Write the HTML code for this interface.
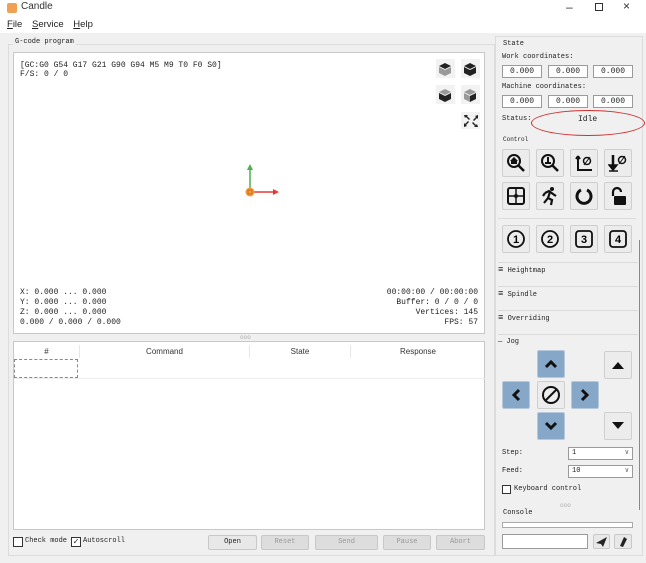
<!DOCTYPE html><html><head><style>
*{margin:0;padding:0;box-sizing:border-box}
body{width:646px;height:563px;background:#f0f0f0;position:relative;overflow:hidden;font-family:"Liberation Mono",monospace;font-size:8px;color:#222}
.a{position:absolute}
.box{position:absolute;background:#fff;border:1px solid #adadad}
.btn{position:absolute;background:#e8e8e8;border:1px solid #c8c8c8;border-radius:2px}
.cb{position:absolute;width:28px;height:28px;background:#ececec;border:1px solid #cfcfcf;border-radius:2px;display:flex;align-items:center;justify-content:center}
.blue{background:#86a7c8;border-color:#b6c8dc}
.num{position:absolute;width:40px;height:13px;background:#fff;border:1px solid #9a9a9a;text-align:center;font-size:8px;line-height:11px}
.sec{position:absolute;left:498px;width:140px;border-top:1px solid #dcdcdc;font-size:8px}
.hb{position:absolute;font-family:"Liberation Sans",sans-serif;font-size:8px;color:#999;text-align:center;line-height:13px}
.mb{font-family:"Liberation Mono",monospace;font-size:7px}
</style></head><body>
<div class="a" style="left:0;top:0;width:646px;height:33px;background:#fff"></div>
<div class="a" style="left:7px;top:3px;width:10px;height:10px;background:#f0a050;border-radius:2px"></div>
<div class="a" style="left:21px;top:1px;font:10px 'Liberation Sans',sans-serif;color:#333">Candle</div>
<div class="a" style="left:566px;top:0;font:12px 'Liberation Sans',sans-serif;color:#333">&#8211;</div>
<div class="a" style="left:595px;top:3px;width:8px;height:8px;border:1px solid #333"></div>
<div class="a" style="left:623px;top:-1px;font:12px 'Liberation Sans',sans-serif;color:#333">&#215;</div>
<div class="a" style="left:7px;top:19px;font:9.5px 'Liberation Sans',sans-serif;color:#222;word-spacing:7px"><u>F</u>ile <u>S</u>ervice <u>H</u>elp</div>

<div class="a" style="left:8px;top:44px;width:487px;height:512px;border:1px solid #dcdcdc"></div>
<div class="a" style="left:13px;top:38px;background:#f0f0f0;padding:0 2px;font-size:7px">G-code program</div>
<div class="box" style="left:13px;top:52px;width:472px;height:282px;border-color:#c8c8c8">
<div class="a" style="left:6px;top:8px;line-height:9px">[GC:G0 G54 G17 G21 G90 G94 M5 M9 T0 F0 S0]<br>F/S: 0 / 0</div>
<div class="a" style="left:6px;top:235px;line-height:10px">X: 0.000 ... 0.000<br>Y: 0.000 ... 0.000<br>Z: 0.000 ... 0.000<br>0.000 / 0.000 / 0.000</div>
<div class="a" style="right:6px;top:235px;line-height:10px;text-align:right">00:00:00 / 00:00:00<br>Buffer: 0 / 0 / 0<br>Vertices: 145<br>FPS: 57</div>
<svg class="a" style="left:420px;top:4px" width="50" height="72">
<g fill="#222"><rect x="2" y="2" width="19" height="19" fill="#f2f2f2"/><rect x="27" y="2" width="19" height="19" fill="#f2f2f2"/><rect x="2" y="28" width="19" height="19" fill="#f2f2f2"/><rect x="27" y="28" width="19" height="19" fill="#f2f2f2"/><rect x="27" y="55" width="19" height="17" fill="#f2f2f2"/>
<path d="M11 6l6 3-6 3-6-3z"/><path d="M5 10l6 3v6l-6-3z M17 10l-6 3v6l6-3z" fill="#999"/>
<path d="M36 6l6 3-6 3-6-3z M30 10l6 3v6l-6-3z M42 10l-6 3v6l6-3z"/>
<path d="M11 32l6 3-6 3-6-3z" fill="#999"/><path d="M5 36l6 3v6l-6-3z M17 36l-6 3v6l6-3z"/>
<path d="M36 32l6 3-6 3-6-3z M30 36l6 3v6l-6-3z" fill="#999"/><path d="M42 36l-6 3v6l6-3z"/>
<path d="M30 58h4l-1 1 3 3-1 1-3-3-1 1z M44 58v4l-1-1-3 3-1-1 3-3-1-1z M30 70v-4l1 1 3-3 1 1-3 3 1 1z M44 70h-4l1-1-3-3 1-1 3 3 1-1z"/></g></svg>
<svg class="a" style="left:225px;top:108px" width="45" height="40"><path d="M11 31V6" stroke="#4caf50" stroke-width="1.5"/><path d="M8 9l3-6 3 6z" fill="#4caf50"/><path d="M11 31h25" stroke="#e53935" stroke-width="1.5"/><path d="M34 28l6 3-6 3z" fill="#e53935"/><circle cx="11" cy="31" r="4.5" fill="#f39c3c"/><rect x="9" y="29" width="4" height="4" fill="none" stroke="#c0601a" stroke-width=".8"/></svg>
</div>
<div class="a" style="left:240px;top:334px;font-size:6px;color:#aaa">ooo</div>
<div class="box" style="left:13px;top:341px;width:472px;height:189px;border-color:#c8c8c8">
<div class="hb" style="left:0;top:3px;width:65px;color:#333">#</div>
<div class="hb" style="left:65px;top:3px;width:170px;color:#333;border-left:1px solid #e6e6e6">Command</div>
<div class="hb" style="left:235px;top:3px;width:101px;color:#333;border-left:1px solid #e6e6e6">State</div>
<div class="hb" style="left:336px;top:3px;width:135px;color:#333;border-left:1px solid #e6e6e6">Response</div>
<div class="a" style="left:0;top:17px;width:64px;height:19px;border:1px dashed #888"></div>
<div class="a" style="left:0;top:36px;width:471px;border-top:1px solid #eee"></div>
</div>
<div class="a" style="left:13px;top:537px;width:10px;height:10px;border:1px solid #333;background:#fff"></div>
<div class="a" style="left:25px;top:537px;font-size:7px">Check mode</div>
<div class="a" style="left:71px;top:537px;width:10px;height:10px;border:1px solid #333;background:#fff;font-size:9px;line-height:8px;text-align:center">&#10003;</div>
<div class="a" style="left:83px;top:537px;font-size:7px">Autoscroll</div>
<div class="btn hb mb" style="left:208px;top:535px;width:49px;height:15px;color:#222">Open</div>
<div class="btn hb mb" style="left:261px;top:535px;width:48px;height:15px;background:#ddd">Reset</div>
<div class="btn hb mb" style="left:315px;top:535px;width:63px;height:15px;background:#ddd">Send</div>
<div class="btn hb mb" style="left:383px;top:535px;width:48px;height:15px;background:#ddd">Pause</div>
<div class="btn hb mb" style="left:436px;top:535px;width:49px;height:15px;background:#ddd">Abort</div>

<div class="a" style="left:495px;top:36px;width:148px;height:520px;border:1px solid #dcdcdc"></div>
<div class="a" style="left:639px;top:240px;width:1px;height:270px;background:#888"></div>
<div class="a" style="left:503px;top:40px;font-size:7px">State</div>
<div class="a" style="left:502px;top:53px;font-size:7px">Work coordinates:</div>
<div class="num" style="left:502px;top:65px">0.000</div><div class="num" style="left:548px;top:65px">0.000</div><div class="num" style="left:593px;top:65px">0.000</div>
<div class="a" style="left:502px;top:83px;font-size:7px">Machine coordinates:</div>
<div class="num" style="left:502px;top:95px">0.000</div><div class="num" style="left:548px;top:95px">0.000</div><div class="num" style="left:593px;top:95px">0.000</div>
<div class="a" style="left:502px;top:115px;font-size:7px">Status:</div>
<div class="a" style="left:578px;top:115px;font-size:8px">Idle</div>
<div class="a" style="left:531px;top:110px;width:114px;height:26px;border:1.5px solid #d03030;border-radius:50%"></div>
<div class="a" style="left:503px;top:136px;font-size:6px">Control</div>
<div class="cb" style="left:502px;top:149px"><svg width="20" height="20"><circle cx="8" cy="8" r="6" fill="none" stroke="#111" stroke-width="2"/><path d="M12 12l6 6" stroke="#111" stroke-width="2.5"/><path d="M8 4l4 4h-1v3H5V8H4z" fill="#111"/></svg></div>
<div class="cb" style="left:536px;top:149px"><svg width="20" height="20"><circle cx="8" cy="8" r="6" fill="none" stroke="#111" stroke-width="2"/><path d="M12 12l6 6" stroke="#111" stroke-width="2.5"/><path d="M8 4v5M5 10h6" stroke="#111" stroke-width="2"/></svg></div>
<div class="cb" style="left:570px;top:149px"><svg width="20" height="20"><path d="M4 3v14h14M4 3l-2 3M4 3l2 3" stroke="#111" stroke-width="2" fill="none"/><circle cx="13" cy="8" r="3.5" fill="none" stroke="#111" stroke-width="1.5"/><path d="M10 12l6-8" stroke="#111"/></svg></div>
<div class="cb" style="left:604px;top:149px"><svg width="20" height="20"><path d="M5 2v13" stroke="#111" stroke-width="2.5"/><path d="M1 12l4 5 4-5z M1 18h9" fill="#111" stroke="#111" stroke-width="1.5"/><circle cx="14" cy="7" r="3.5" fill="none" stroke="#111" stroke-width="1.5"/><path d="M11 11l6-8" stroke="#111"/></svg></div>
<div class="cb" style="left:502px;top:182px"><svg width="20" height="20"><rect x="2" y="2" width="16" height="16" rx="2" fill="none" stroke="#111" stroke-width="2"/><path d="M10 2v16M2 10h16" stroke="#111" stroke-width="1.5"/><circle cx="10" cy="10" r="2" fill="#111"/></svg></div>
<div class="cb" style="left:536px;top:182px"><svg width="20" height="20"><circle cx="12" cy="3" r="2" fill="#111"/><path d="M5 7l4-2 4 3 3 2M10 6l-2 6-4 5M8 12l4 2-1 5M5 7l-2 3" stroke="#111" stroke-width="2.2" fill="none"/></svg></div>
<div class="cb" style="left:570px;top:182px"><svg width="20" height="20"><path d="M13 4A7 7 0 1 1 7 4" stroke="#111" stroke-width="3" fill="none"/></svg></div>
<div class="cb" style="left:604px;top:182px"><svg width="20" height="20"><path d="M5 10V6a4 4 0 0 1 8 0" stroke="#111" stroke-width="2.2" fill="none"/><rect x="6" y="10" width="12" height="9" rx="1" fill="#111"/></svg></div>
<div class="a" style="left:498px;top:218px;width:138px;border-top:1px solid #dcdcdc"></div>
<div class="cb" style="left:502px;top:225px"><svg width="20" height="20"><circle cx="10" cy="10" r="8" fill="none" stroke="#111" stroke-width="1.8"/><text x="10" y="14" font-size="11" text-anchor="middle" font-family="Liberation Sans" font-weight="bold">1</text></svg></div>
<div class="cb" style="left:536px;top:225px"><svg width="20" height="20"><circle cx="10" cy="10" r="8" fill="none" stroke="#111" stroke-width="1.8"/><text x="10" y="14" font-size="11" text-anchor="middle" font-family="Liberation Sans" font-weight="bold">2</text></svg></div>
<div class="cb" style="left:570px;top:225px"><svg width="20" height="20"><rect x="2" y="2" width="16" height="16" rx="3" fill="none" stroke="#111" stroke-width="1.8"/><text x="10" y="14" font-size="11" text-anchor="middle" font-family="Liberation Sans" font-weight="bold">3</text></svg></div>
<div class="cb" style="left:604px;top:225px"><svg width="20" height="20"><rect x="2" y="2" width="16" height="16" rx="3" fill="none" stroke="#111" stroke-width="1.8"/><text x="10" y="14" font-size="11" text-anchor="middle" font-family="Liberation Sans" font-weight="bold">4</text></svg></div>
<div class="sec" style="top:262px"></div>
<div class="a" style="left:498px;top:265px;font-size:7px"><b style="font-size:9px">&#8801;</b> Heightmap</div>
<div class="sec" style="top:286px"></div>
<div class="a" style="left:498px;top:289px;font-size:7px"><b style="font-size:9px">&#8801;</b> Spindle</div>
<div class="sec" style="top:310px"></div>
<div class="a" style="left:498px;top:313px;font-size:7px"><b style="font-size:9px">&#8801;</b> Overriding</div>
<div class="sec" style="top:334px"></div>
<div class="a" style="left:498px;top:338px;font-size:7px">&#8212; Jog</div>
<div class="cb blue" style="left:537px;top:350px"><svg width="14" height="14"><path d="M2 10l5-5 5 5" stroke="#111" stroke-width="3" fill="none"/></svg></div>
<div class="cb blue" style="left:502px;top:381px"><svg width="14" height="14"><path d="M10 2L5 7l5 5" stroke="#111" stroke-width="3" fill="none"/></svg></div>
<div class="cb" style="left:537px;top:381px"><svg width="22" height="22"><circle cx="11" cy="11" r="8" fill="none" stroke="#111" stroke-width="2"/><path d="M5 17L17 5" stroke="#111" stroke-width="2"/></svg></div>
<div class="cb blue" style="left:571px;top:381px"><svg width="14" height="14"><path d="M4 2l5 5-5 5" stroke="#111" stroke-width="3" fill="none"/></svg></div>
<div class="cb blue" style="left:537px;top:412px"><svg width="14" height="14"><path d="M2 4l5 5 5-5" stroke="#111" stroke-width="3" fill="none"/></svg></div>
<div class="cb" style="left:604px;top:351px"><svg width="14" height="10"><path d="M1 9l6-7 6 7z" fill="#111"/></svg></div>
<div class="cb" style="left:604px;top:412px"><svg width="14" height="10"><path d="M1 1l6 7 6-7z" fill="#111"/></svg></div>
<div class="a" style="left:502px;top:449px;font-size:7px">Step:</div>
<div class="a" style="left:568px;top:447px;width:65px;height:13px;background:#fff;border:1px solid #9a9a9a;padding-left:3px;font-size:7px;line-height:11px">1<span style="float:right;margin-right:3px;color:#666">&#8744;</span></div>
<div class="a" style="left:502px;top:467px;font-size:7px">Feed:</div>
<div class="a" style="left:568px;top:465px;width:65px;height:13px;background:#fff;border:1px solid #9a9a9a;padding-left:3px;font-size:7px;line-height:11px">10<span style="float:right;margin-right:3px;color:#666">&#8744;</span></div>
<div class="a" style="left:502px;top:485px;width:9px;height:9px;border:1px solid #333;background:#fff"></div>
<div class="a" style="left:514px;top:485px;font-size:7px">Keyboard control</div>
<div class="a" style="left:560px;top:502px;font-size:6px;color:#aaa">ooo</div>
<div class="a" style="left:503px;top:509px;font-size:7px">Console</div>
<div class="a" style="left:502px;top:522px;width:131px;height:6px;background:#fff;border:1px solid #aaa"></div>
<div class="a" style="left:502px;top:534px;width:86px;height:15px;background:#fff;border:1px solid #9a9a9a"></div>
<div class="btn" style="left:593px;top:534px;width:17px;height:15px"><svg width="15" height="13"><path d="M2 8l11-6-4 10-2-3z" fill="#222"/></svg></div>
<div class="btn" style="left:614px;top:534px;width:18px;height:15px"><svg width="16" height="13"><path d="M5 11l4-9 3 2-4 8z" fill="#222"/></svg></div>
</body></html>
